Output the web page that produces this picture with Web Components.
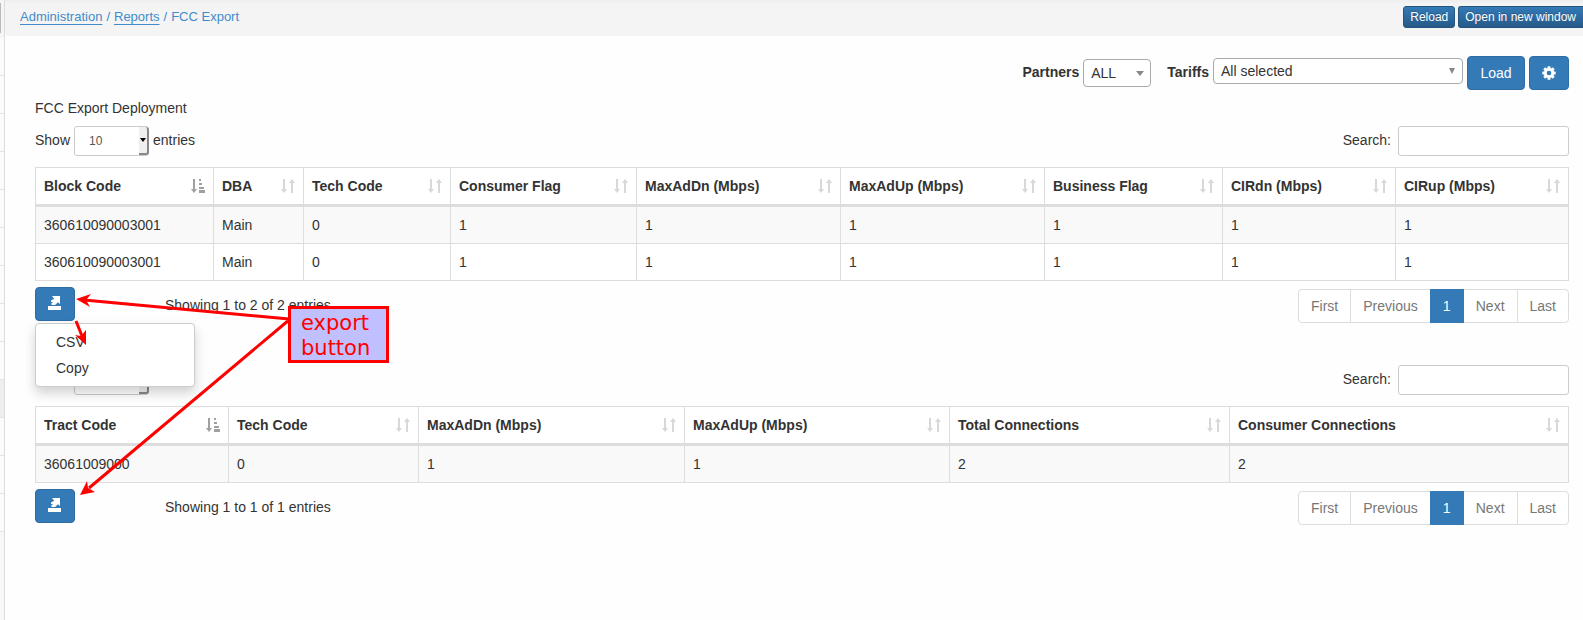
<!DOCTYPE html>
<html lang="en">
<head>
<meta charset="utf-8">
<title>FCC Export</title>
<style>
html, body { margin: 0; min-height: 100%; }
body { font: 14px/20px "Liberation Sans", Arial, sans-serif; color: #333; background: #fefefe; overflow: hidden; }
.title { margin: 8px 0; }
</style>
</head>
<body>
<report-page>
  <page-header slot="header"></page-header>
  <report-toolbar></report-toolbar>
  <div class="title">FCC Export Deployment</div>
  <report-table name="block" menu="open"
    columns='[["Block Code",178],["DBA",90],["Tech Code",147],["Consumer Flag",186],["MaxAdDn (Mbps)",204],["MaxAdUp (Mbps)",204],["Business Flag",178],["CIRdn (Mbps)",173],["CIRup (Mbps)",173]]'
    rows='[["360610090003001","Main","0","1","1","1","1","1","1"],["360610090003001","Main","0","1","1","1","1","1","1"]]'>Showing 1 to 2 of 2 entries</report-table>
  <report-table name="tract"
    columns='[["Tract Code",193],["Tech Code",190],["MaxAdDn (Mbps)",266],["MaxAdUp (Mbps)",265],["Total Connections",280],["Consumer Connections",339]]'
    rows='[["36061009000","0","1","1","2","2"]]'>Showing 1 to 1 of 1 entries</report-table>
  <callout-note slot="overlay">export button</callout-note>
</report-page>

<script>
const base = `
  *, *::before, *::after { box-sizing: border-box; }
  :host { display: block; }
  button, input, select { font: inherit; color: inherit; margin: 0; }
  .primary { display: inline-flex; align-items: center; justify-content: center; height: 34px; padding: 0 12px;
    color: #fff; background: #337ab7; border: 1px solid #2e6da4; border-radius: 4px; }
`;
const define = (name, css, html) => customElements.define(name, class extends HTMLElement {
  constructor() {
    super();
    this.attachShadow({ mode: 'open' }).innerHTML =
      `<style>${base}${css}</style>${typeof html === 'function' ? html(this) : html}`;
  }
});

/* collapsed side menu: only its right edge stays on screen */
define('side-rail', `
  :host { width: 5px; flex: none; background: #f8f8f8; border-right: 1px solid #ddd; }
  .top { height: 38px; padding: 3px 0 5px; background: #f5f5f5; }
  .top i { display: block; width: 1px; height: 100%; background: #bbb; }
  .item { height: 38px; background: #fcfcfc; border-bottom: 1px solid #e4e4e4; }
  .active { background: #eee; }
`, () => '<div class="top"><i></i></div>' +
  Array.from({ length: 13 }, (_, i) => `<div class="item${i === 9 ? ' active' : ''}"></div>`).join(''));

define('report-page', `
  :host { display: flex; min-height: 100vh; position: relative; }
  main { flex: 1; min-width: 0; }
  section { padding: 20px 14px 0 30px; }
`, `<side-rail></side-rail><main><slot name="header"></slot><section><slot></slot></section></main><slot name="overlay"></slot>`);

define('page-header', `
  :host { display: flex; justify-content: space-between; align-items: center; height: 36px; padding-left: 15px;
    background: linear-gradient(#eee, #f4f4f4 4px); font-size: 13px; color: #428bca; border-bottom-left-radius: 4px; overflow: hidden; }
  nav { display: flex; gap: 4px; padding-bottom: 2px; }
  a { color: #428bca; text-underline-offset: 3px; }
  .actions { display: flex; gap: 3px; padding-bottom: 2px; }
  .actions button { height: 22px; padding: 0 6px; font-size: 12px; line-height: 18px; color: #fff; border: 1px solid #245580;
    border-radius: 3px; background: linear-gradient(#337ab7, #265a88); text-shadow: 0 -1px 0 rgba(0,0,0,.2); white-space: nowrap; }
  .actions button:last-child { padding: 0 7px 0 6px; border-right: 0; border-radius: 3px 0 0 3px; }
`, `<nav aria-label="Breadcrumb"><a href="#admin">Administration</a><span>/</span><a href="#reports">Reports</a><span>/</span><span>FCC Export</span></nav>
<div class="actions"><button>Reload</button><button>Open in new window</button></div>`);

define('report-toolbar', `
  :host { display: flex; justify-content: flex-end; align-items: flex-start; gap: 4px; height: 34px; }
  label { font-weight: bold; padding-top: 6px; }
  .pick { display: grid; align-items: center; margin-top: 2px; }
  .pick > * { grid-area: 1 / 1; }
  .pick svg { justify-self: end; margin-right: 7px; pointer-events: none; }
  select { appearance: none; width: 100%; height: 26px; padding: 0 7px; background: #fff; border: 1px solid #aaa; border-radius: 4px; }
  .partners { width: 68px; margin-right: 12px; margin-top: 3px; }
  .partners select { height: 28px; }
  .tariffs { width: 250px; }
  .icon { padding: 0; width: 40px; }
  .load { width: 58px; }
`, `<label for="p">Partners</label>
<span class="pick partners"><select id="p"><option>ALL</option></select><svg width="8" height="5"><path d="M0 0h8L4 5z" fill="#888"/></svg></span>
<label for="t">Tariffs</label>
<span class="pick tariffs"><select id="t"><option>All selected</option></select><svg width="8" height="6"><path d="M1 0h6L4 6z" fill="#888"/></svg></span>
<button class="primary load">Load</button>
<button class="primary icon" aria-label="Settings"><svg width="14" height="14" viewBox="-7 -7 14 14"><g fill="#fff"><rect x="-1.5" y="-6.7" width="3" height="13.4" rx=".5"/><rect x="-1.5" y="-6.7" width="3" height="13.4" rx=".5" transform="rotate(45)"/><rect x="-1.5" y="-6.7" width="3" height="13.4" rx=".5" transform="rotate(90)"/><rect x="-1.5" y="-6.7" width="3" height="13.4" rx=".5" transform="rotate(135)"/><circle r="5.1"/></g><circle r="2.3" fill="#337ab7"/></svg></button>`);

define('sort-icon', `
  :host { display: block; flex: none; width: 14px; height: 14px; color: #d8d8d8; }
  :host([active]) { color: #a0a0a0; }
  svg { display: block; }
`, el => `<svg width="14" height="14" fill="currentColor"><path d="M2 0h2v10h2l-3 4-3-4h2z"/>${
  el.hasAttribute('active')
    ? '<path d="M8 0h2v2H8zM8 4h3v2H8zM8 8h5v2H8zM8 11h6v3H8z"/>'
    : '<path d="M10 14h2V4h2l-3-4-3 4h2z"/>'}</svg>`);

define('export-menu', `
  :host { display: block; position: relative; }
  .primary { width: 40px; padding: 0 0 2px; }
  svg { display: block; }
  ul { position: absolute; z-index: 2; top: 36px; left: 0; width: 160px; margin: 0; padding: 5px 0; list-style: none; background: #fff;
    border: 1px solid #ccc; border-radius: 4px; box-shadow: 0 6px 12px rgba(0,0,0,.18); }
  a { display: block; padding: 3px 20px; color: #333; text-decoration: none; }
`, el => `<button class="primary" aria-label="Export" aria-expanded="${el.hasAttribute('open')}"><svg width="14" height="14" fill="#fff"><path d="M0 10h13v4H0zM4 0h8v8L10 6.200 7 9H4L3 8 5 6H3V4.500L6.200 2.700z"/></svg></button>${
  el.hasAttribute('open') ? '<ul><li><a href="#csv">CSV</a></li><li><a href="#copy">Copy</a></li></ul>' : ''}`);

define('page-links', `
  nav { display: flex; }
  a { height: 34px; padding: 6px 12px; border: 1px solid #ddd; margin-left: -1px; background: #fff; color: #777; text-decoration: none; }
  a:first-child { margin-left: 0; border-radius: 4px 0 0 4px; }
  a:last-child { border-radius: 0 4px 4px 0; }
  a[aria-current] { min-width: 34px; background: #337ab7; border-color: #337ab7; color: #fff; z-index: 1; }
`, `<nav aria-label="Pages"><a href="#first">First</a><a href="#prev">Previous</a><a href="#1" aria-current="page">1</a><a href="#next">Next</a><a href="#last">Last</a></nav>`);

define('report-table', `
  :host { margin-bottom: 42px; }
  .controls { display: flex; justify-content: space-between; height: 30px; margin-bottom: 11px; }
  .controls > div { display: flex; align-items: center; gap: 4px; }
  .controls > .search { gap: 7px; }
  .controls label { padding-bottom: 2px; }
  .length { display: grid; width: 75px; }
  .length > * { grid-area: 1 / 1; }
  .length select { appearance: none; height: 30px; padding: 0 14px; font-size: 12px; color: #555; background: #fff;
    border: 1px solid #ccc; border-radius: 3px; }
  .length i { justify-self: end; display: grid; place-items: center; width: 10px; height: 28px; margin: 1px 0; background: #f0efee;
    border: solid #888; border-width: 0 2px 2px 0; border-radius: 0 3px 3px 0; pointer-events: none; }
  input { width: 171px; height: 30px; padding: 0 10px; background: #fff; border: 1px solid #ccc; border-radius: 3px; }
  table { table-layout: fixed; width: 100%; border-spacing: 0; border: solid #ddd; border-width: 1px 0 0 1px; background: #fff; }
  th, td { padding: 8px; text-align: left; border: solid #ddd; border-width: 0 1px 1px 0; }
  th { border-bottom-width: 3px; }
  th button { display: flex; width: 100%; height: 20px; padding: 0; border: 0; background: none; justify-content: space-between;
    align-items: center; font-weight: bold; white-space: nowrap; }
  tbody tr:nth-child(odd) { background: #f9f9f9; }
  footer { display: flex; align-items: flex-start; padding-top: 6px; }
  .info { margin-left: 90px; padding-top: 8px; flex: 1; }
  page-links { margin-top: 2px; }
`, el => {
  const cols = JSON.parse(el.getAttribute('columns')), rows = JSON.parse(el.getAttribute('rows'));
  return `<div class="controls"><div><label for="len">Show</label>
    <span class="length"><select id="len"><option>10</option></select><i><svg width="6" height="4"><path d="M0 0h6L3 4z"/></svg></i></span><label for="len">entries</label></div>
    <div class="search"><label for="q">Search:</label><input id="q" type="search"></div></div>
  <table><colgroup>${cols.map(c => `<col style="width:${c[1]}px">`).join('')}</colgroup>
  <thead><tr>${cols.map((c, i) => `<th scope="col"><button>${c[0]}<sort-icon${i ? '' : ' active'}></sort-icon></button></th>`).join('')}</tr></thead>
  <tbody>${rows.map(r => `<tr>${r.map(v => `<td>${v}</td>`).join('')}</tr>`).join('')}</tbody></table>
  <footer><export-menu${el.hasAttribute('menu') ? ' open' : ''}></export-menu><span class="info"><slot></slot></span><page-links></page-links></footer>`;
});

/* red note with arrows, drawn freely over the page */
define('callout-note', `
  :host { position: absolute; z-index: 5; left: 0; top: 0; pointer-events: none; }
  svg { display: block; }
  .box { position: absolute; left: 288px; top: 306px; width: 101px; height: 57px; padding: 2px 10px; border: 3px solid #f00;
    background: #c0c0ff; color: #f00; font: 21px/25px "DejaVu Sans", sans-serif; }
`, `<svg width="400" height="520" fill="#f00"><g stroke="#f00" stroke-width="3"><path d="M289 319L84 300M289 320L89 488M76 321L82 336"/></g>
<path d="M76 299L91 294 86 300 90 307zM80 495L87 481 88 488 95 492zM86 345L75 335 81 336 86 330z"/></svg><div class="box"><slot></slot></div>`);
</script>
</body>
</html>
